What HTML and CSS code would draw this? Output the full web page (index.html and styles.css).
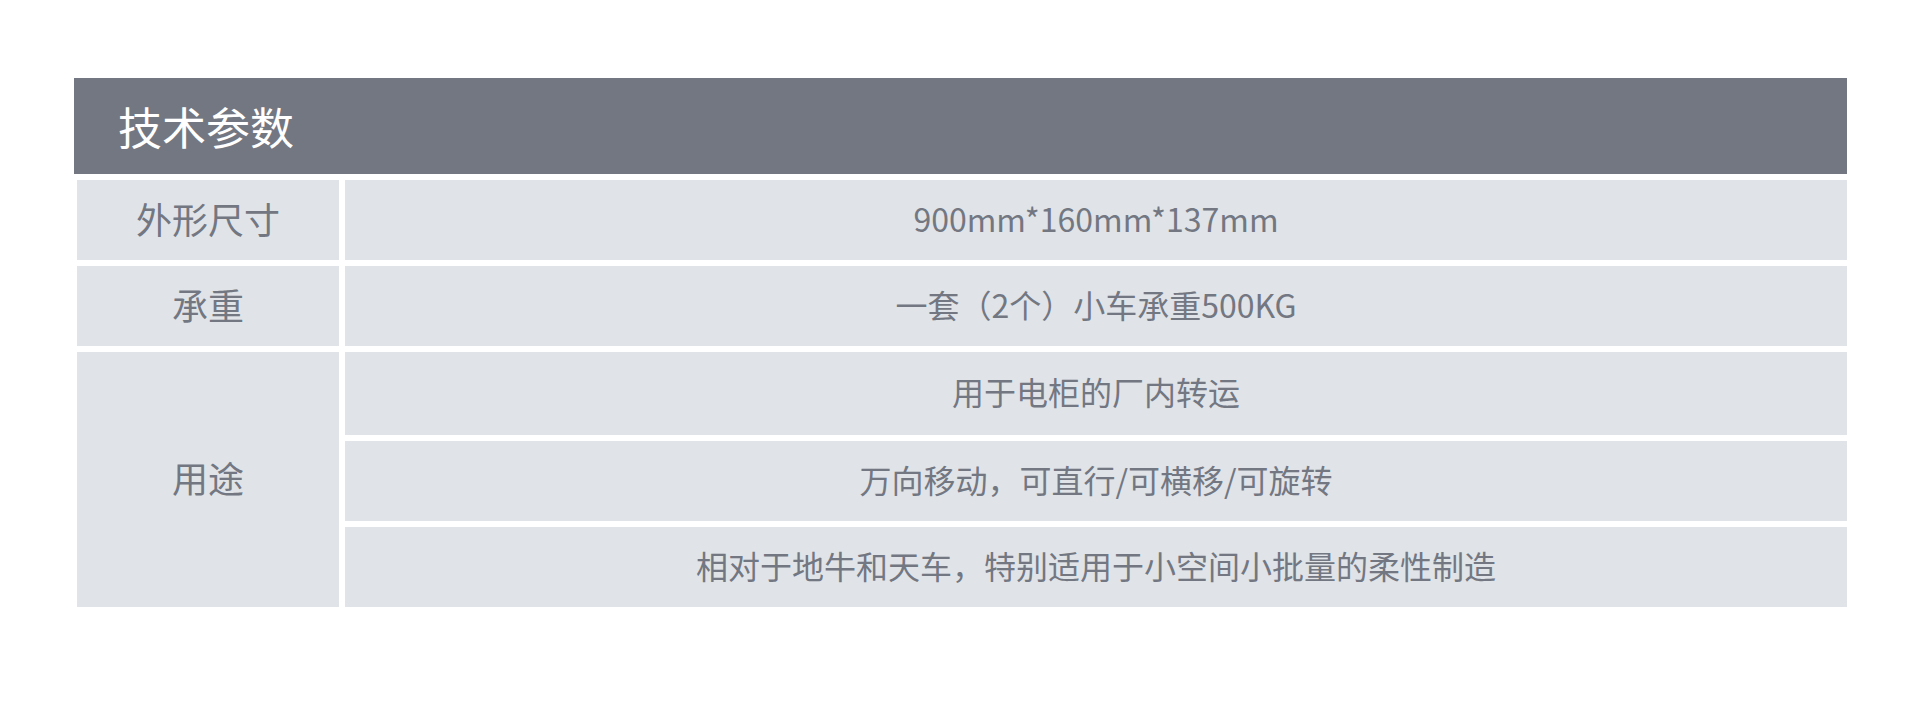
FILE: index.html
```html
<!DOCTYPE html>
<html lang="zh-CN">
<head>
<meta charset="utf-8">
<title>技术参数</title>
<link rel="stylesheet" href="styles.css">
</head>
<body>
<div class="spec">
  <div class="spec-title">技术参数</div>
  <div class="spec-grid">
    <div class="cell label r1">外形尺寸</div>
    <div class="cell value r1">900mm*160mm*137mm</div>
    <div class="cell label r2">承重</div>
    <div class="cell value r2">一套（2个）小车承重500KG</div>
    <div class="cell label use">用途</div>
    <div class="cell value r3">用于电柜的厂内转运</div>
    <div class="cell value r4">万向移动，可直行/可横移/可旋转</div>
    <div class="cell value r5">相对于地牛和天车，特别适用于小空间小批量的柔性制造</div>
  </div>
</div>
</body>
</html>
```

FILE: styles.css
```css
html, body {
  margin: 0;
  padding: 0;
  background: #ffffff;
}
body {
  font-family: "Noto Sans CJK SC", "Noto Sans", sans-serif;
  width: 1920px;
  height: 716px;
  overflow: hidden;
}
.spec {
  margin: 78px 0 0 74px;
  width: 1773px;
  display: flex;
  flex-direction: column;
  gap: 6px;
}
.spec-title {
  height: 96px;
  background: #737782;
  color: #ffffff;
  font-size: 44px;
  line-height: 96px;
  padding-left: 44px;
}
.spec-grid {
  margin-left: 3px;
  display: grid;
  grid-template-columns: 262px 1fr;
  grid-template-rows: 80px 80px 83px 80px 80px;
  gap: 6px;
}
.cell {
  background: #e0e4e8;
  color: #737782;
  display: flex;
  align-items: center;
  justify-content: center;
  padding-bottom: 5px;
  box-sizing: border-box;
}
.label {
  font-size: 36px;
}
.value {
  font-size: 32px;
}
.use {
  grid-row: 3 / span 3;
}
```
